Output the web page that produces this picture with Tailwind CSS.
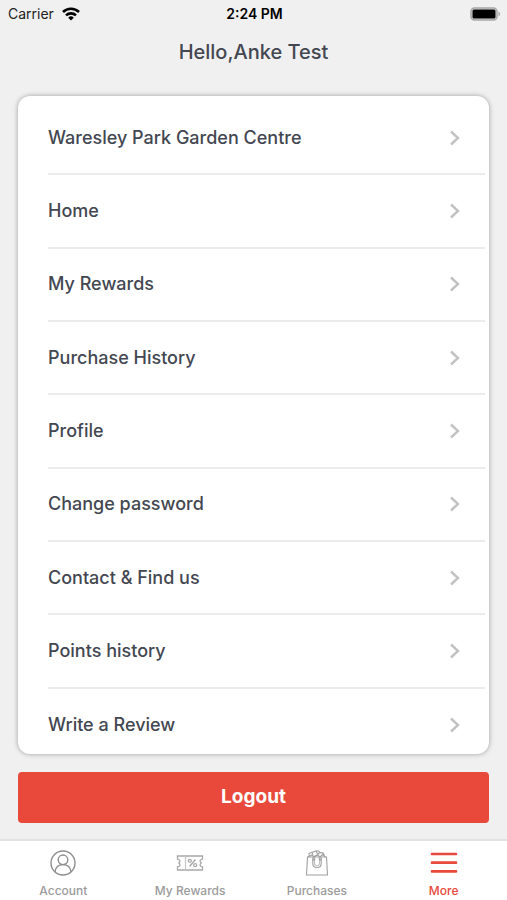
<!DOCTYPE html>
<html lang="en">
<head>
  <meta charset="UTF-8" />
  <meta name="viewport" content="width=device-width, initial-scale=1.0">
  <title>More</title>
  <script src="https://cdn.jsdelivr.net/npm/@tailwindcss/browser@4"></script>
</head>
<body class="h-screen min-h-[640px] flex flex-col bg-[#f0f0f0] font-['Inter','Liberation_Sans',sans-serif] text-[#434751]">
  <!-- Status bar -->
  <div class="grid grid-cols-3 items-center h-7 pl-2 pr-1.5 text-sm text-black">
    <div class="flex items-center gap-2">
      <span class="text-[#222]">Carrier</span>
      <svg class="w-[18px] h-[14px]" viewBox="0 0 18 14" fill="none" stroke="black" stroke-width="2.6">
        <path d="M1 5a11.5 11.5 0 0 1 16 0" />
        <path d="M4 8.4a7.2 7.2 0 0 1 10 0" />
        <path d="M9 13.5L6.2 10.7a4 4 0 0 1 5.6 0z" fill="black" stroke="none" />
      </svg>
    </div>
    <span class="text-center font-semibold">2:24 PM</span>
    <svg class="justify-self-end w-[31px] h-[14px]" viewBox="0 0 31 14">
      <rect x="1" y="1" width="26" height="12" rx="3.5" fill="#d8d8d8" stroke="#a6a6a6" stroke-width="1.5" />
      <rect x="2.5" y="2.5" width="23" height="9" rx="1.5" fill="black" />
      <path d="M28.5 4.5c2 .8 2 4.2 0 5z" fill="#a6a6a6" />
    </svg>
  </div>

  <h1 class="h-12 text-xl leading-12 font-medium text-center">Hello,Anke Test</h1>

  <main class="flex-1 min-h-0 flex flex-col gap-[18px] px-[18px] pt-5 pb-4">
    <!-- Menu card -->
    <div class="flex-1 min-h-0 flex flex-col overflow-hidden rounded-xl bg-white shadow-[0_0_5px_rgba(0,0,0,0.35)]">
      <ul class="flex-1 min-h-0 grid auto-rows-fr mt-1.5 -mb-2 ml-[30px] mr-1 text-lg font-medium">
        <li class="border-b-2 border-[#ebebeb]"><a href="#" class="flex items-center justify-between h-full pr-[25px]">Waresley Park Garden Centre<svg class="w-[10px] h-4" viewBox="0 0 10 16" fill="none" stroke="#c2c2c4" stroke-width="2.4"><path d="M1 1.5L8 8L1 14.5" /></svg></a></li>
        <li class="border-b-2 border-[#ebebeb]"><a href="#" class="flex items-center justify-between h-full pr-[25px]">Home<svg class="w-[10px] h-4" viewBox="0 0 10 16" fill="none" stroke="#c2c2c4" stroke-width="2.4"><path d="M1 1.5L8 8L1 14.5" /></svg></a></li>
        <li class="border-b-2 border-[#ebebeb]"><a href="#" class="flex items-center justify-between h-full pr-[25px]">My Rewards<svg class="w-[10px] h-4" viewBox="0 0 10 16" fill="none" stroke="#c2c2c4" stroke-width="2.4"><path d="M1 1.5L8 8L1 14.5" /></svg></a></li>
        <li class="border-b-2 border-[#ebebeb]"><a href="#" class="flex items-center justify-between h-full pr-[25px]">Purchase History<svg class="w-[10px] h-4" viewBox="0 0 10 16" fill="none" stroke="#c2c2c4" stroke-width="2.4"><path d="M1 1.5L8 8L1 14.5" /></svg></a></li>
        <li class="border-b-2 border-[#ebebeb]"><a href="#" class="flex items-center justify-between h-full pr-[25px]">Profile<svg class="w-[10px] h-4" viewBox="0 0 10 16" fill="none" stroke="#c2c2c4" stroke-width="2.4"><path d="M1 1.5L8 8L1 14.5" /></svg></a></li>
        <li class="border-b-2 border-[#ebebeb]"><a href="#" class="flex items-center justify-between h-full pr-[25px]">Change password<svg class="w-[10px] h-4" viewBox="0 0 10 16" fill="none" stroke="#c2c2c4" stroke-width="2.4"><path d="M1 1.5L8 8L1 14.5" /></svg></a></li>
        <li class="border-b-2 border-[#ebebeb]"><a href="#" class="flex items-center justify-between h-full pr-[25px]">Contact &amp; Find us<svg class="w-[10px] h-4" viewBox="0 0 10 16" fill="none" stroke="#c2c2c4" stroke-width="2.4"><path d="M1 1.5L8 8L1 14.5" /></svg></a></li>
        <li class="border-b-2 border-[#ebebeb]"><a href="#" class="flex items-center justify-between h-full pr-[25px]">Points history<svg class="w-[10px] h-4" viewBox="0 0 10 16" fill="none" stroke="#c2c2c4" stroke-width="2.4"><path d="M1 1.5L8 8L1 14.5" /></svg></a></li>
        <li><a href="#" class="flex items-center justify-between h-full pr-[25px]">Write a Review<svg class="w-[10px] h-4" viewBox="0 0 10 16" fill="none" stroke="#c2c2c4" stroke-width="2.4"><path d="M1 1.5L8 8L1 14.5" /></svg></a></li>
      </ul>
    </div>

    <button type="button" class="h-[51px] shrink-0 rounded bg-[#e8493a] text-[19px] font-bold text-white">Logout</button>
  </main>

  <!-- Tab bar -->
  <nav class="grid grid-cols-4 h-[61px] shrink-0 border-t-2 border-[#e2e2e2] bg-white text-xs font-medium text-[#9b9b9b]">
    <a href="#" class="flex flex-col items-center gap-1.5 pt-2">
      <svg class="size-7" viewBox="0 0 28 28" fill="none" stroke="#8e8e8e" stroke-width="1.4">
        <circle cx="14" cy="14" r="12" />
        <circle cx="14" cy="10.8" r="4.8" />
        <path d="M6 22.8c.5-4.5 3.600-7.200 8-7.200s7.500 2.700 8 7.200" />
      </svg>
      Account
    </a>
    <a href="#" class="flex flex-col items-center gap-1.5 pt-2">
      <svg class="size-7" viewBox="0 0 28 28" fill="none" stroke="#a8a8a8" stroke-width="1.3">
        <path d="M1.5 7h25v3.200c-2 .3-2.800 1.300-2.300 2.500l1 1.300-1 1.300c-.5 1.200.3 2.200 2.300 2.500V21h-25v-3.200c2-.3 2.800-1.300 2.300-2.500l-1-1.300 1-1.300c.5-1.200-.3-2.200-2.300-2.500z" />
        <path d="M9.500 7v14" stroke="#c8c8c8" />
        <path d="M19.500 10.500l-6 7" />
        <circle cx="13.800" cy="11.800" r="1.500" />
        <circle cx="19.200" cy="16.200" r="1.500" />
      </svg>
      My Rewards
    </a>
    <a href="#" class="flex flex-col items-center gap-1.5 pt-2">
      <svg class="size-7" viewBox="0 0 28 28" fill="none" stroke="#a0a0a0" stroke-width="1.1">
        <path d="M4.500 8h19l1 18h-21z" />
        <path d="M9.800 10v4.500c0 5.400 8.400 5.400 8.400 0V10" />
        <path d="M11.500 10v4.300c0 3.200 5 3.200 5 0V10" stroke="#c0c0c0" />
        <circle cx="10.700" cy="10" r="1.100" />
        <circle cx="17.300" cy="10" r="1.100" />
        <path d="M6.500 8l-.6-3.500 3-1.300 1 2.200M8.500 3.500l4.500-1.500 2 3.500L10 8M13 2.200c2-1 3.500-.2 3.500 1.500M15 5.300c1-2.300 5.500-2.300 6 .2l.5 2.500M5 8l4-2 2 2 3.500-2 2.500 2 2.500-2.500L22.500 8" />
      </svg>
      Purchases
    </a>
    <a href="#" class="flex flex-col items-center gap-1.5 pt-2 text-[#e8493a]">
      <svg class="size-7" viewBox="0 0 28 28" fill="none" stroke="#e8493a" stroke-width="2.7" stroke-linecap="round">
        <path d="M2 5h24M2 13.700h24M2 22.400h24" />
      </svg>
      More
    </a>
  </nav>
</body>
</html>
